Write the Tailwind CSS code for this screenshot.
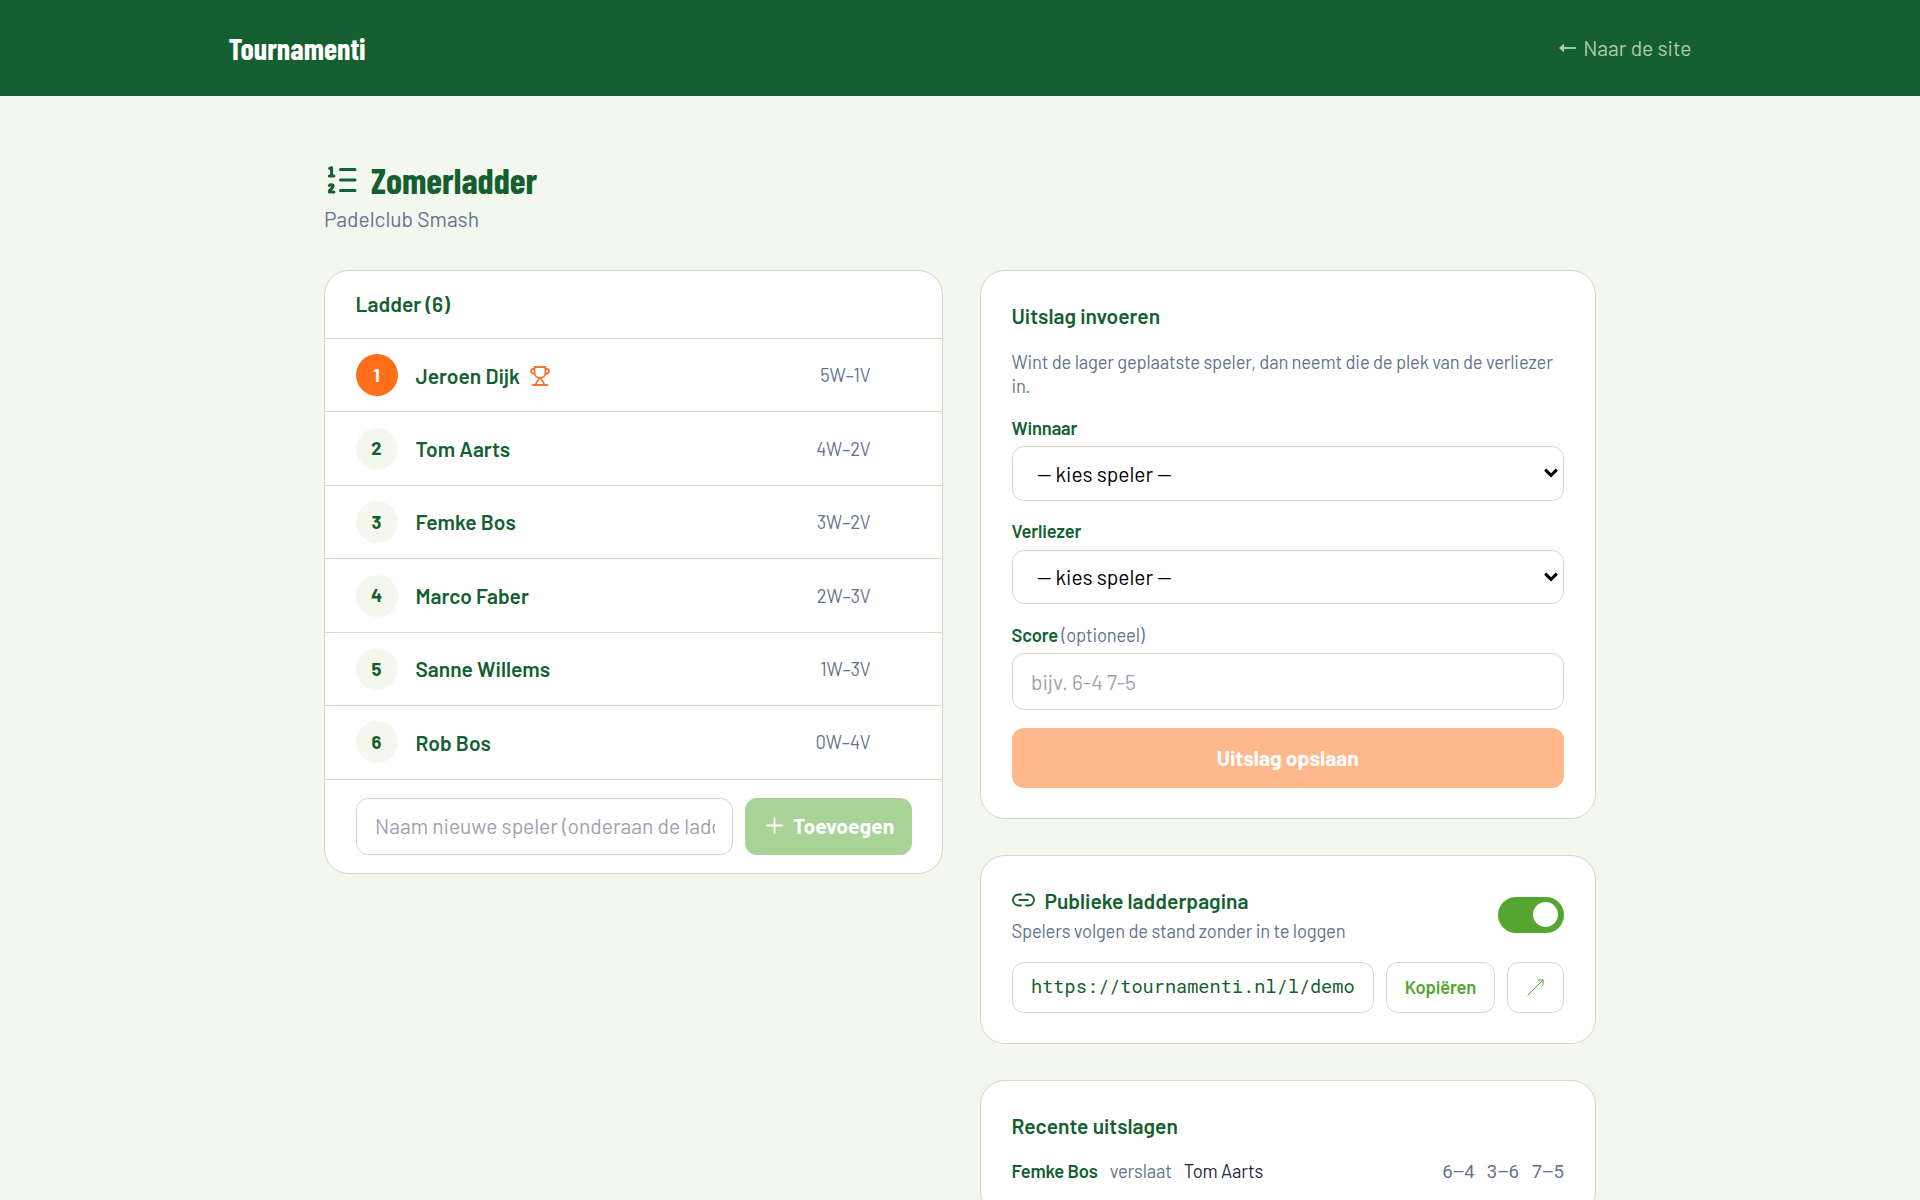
<!DOCTYPE html>
<html lang="nl">
<head>
    <meta charset="UTF-8">
    <meta name="viewport" content="width=device-width, initial-scale=1.0">
    <title>Zomerladder - Tournamenti</title>
    <script src="https://cdn.jsdelivr.net/npm/@tailwindcss/browser@4"></script>
</head>
<body class="bg-[#f4f7ee] text-slate-800 font-['Barlow',Roboto,sans-serif] text-[21px] leading-[1.3] h-[1200px] overflow-hidden">
    <header class="bg-[#145f30] h-[96px]">
        <div class="w-[1463px] mx-auto h-full flex items-center justify-between">
            <a href="#" class="font-['Barlow_Condensed',Roboto,sans-serif] font-bold text-[30px] text-white">Tournamenti</a>
            <a href="#" class="text-[#b1cbae] flex items-center gap-[7px]">
                <svg class="w-[17px] h-[10px]" viewBox="0 0 17 10" fill="none" stroke="currentColor" stroke-width="1.8"><path d="M4 5h13"/><path d="M0 5l5-4.5v9z" fill="currentColor" stroke="none"/></svg>
                Naar de site
            </a>
        </div>
    </header>

    <main class="w-[1272px] mx-auto pt-[60px]">
        <h1 class="flex items-center gap-[11px] h-[47px] font-['Barlow_Condensed',Roboto,sans-serif] font-bold text-[36.2px] text-[#145f30]">
            <svg class="w-[36px] h-[36px]" viewBox="0 0 36 36" fill="none" stroke="currentColor" stroke-width="3" stroke-linecap="round" stroke-linejoin="round">
                <path d="M16.5 7.5H31M16.5 18H31M16.5 28.5H31"/>
                <path d="M5.6 6.5L7.6 5.7v8M5.3 14h4.6"/>
                <path d="M5.4 23.5c1-1.4 4-1 3.7.9-.2 1.6-3.7 2.7-3.8 5.5h4.6"/>
            </svg>
            Zomerladder
        </h1>
        <p class="mt-[2px] h-[27px] text-slate-500">Padelclub Smash</p>

        <div class="mt-[38px] grid grid-cols-[619px_616px] gap-[36.5px] items-start">
            <section class="bg-white border border-[#d3d9c7] rounded-[25px] overflow-hidden">
                <h2 class="px-[30.5px] h-[67px] pb-[1px] flex items-center font-semibold text-[#145f30]">Ladder (6)</h2>
                <ul id="ladder"></ul>
                <form class="border-t border-[#d3d9c7] px-[30.5px] pt-[18.5px] pb-[18px] flex gap-3">
                    <input type="text" placeholder="Naam nieuwe speler (onderaan de ladder)" class="flex-1 min-w-0 h-[56.5px] pl-[18.5px] pr-[17px] pb-[1px] rounded-xl border border-[#d3d9c7] placeholder:text-[#9ca3af]">
                    <button type="button" class="w-[166.5px] h-[56.5px] pb-[1px] rounded-xl bg-[#a9d397] text-white font-bold flex items-center pl-[17px] gap-[6px]">
                        <svg class="w-[25px] h-[25px]" viewBox="0 0 512 512" fill="none" stroke="currentColor" stroke-width="36" stroke-linecap="round"><path d="M256 104v304M408 256H104"/></svg>
                        Toevoegen
                    </button>
                </form>
            </section>

            <div class="flex flex-col gap-[36.5px]">
                <section class="bg-white border border-[#d3d9c7] rounded-[25px] pl-[31px] pr-[30.5px] pt-[31px] h-[548.5px]">
                    <h2 class="font-semibold text-[#145f30] h-[27px]">Uitslag invoeren</h2>
                    <p class="mt-[20.5px] text-[18.4px] tracking-[-0.18px] leading-[24px] text-slate-500">Wint de lager geplaatste speler, dan neemt die de plek van de verliezer in.</p>
                    <label class="block mt-[19px] h-[23.5px] text-[18.4px] tracking-[-0.18px] font-semibold text-[#145f30]">Winnaar</label>
                    <div class="relative mt-[6px]">
                        <select class="appearance-none block w-full h-[54.5px] pl-[24.5px] pr-10 rounded-xl border border-[#d3d9c7] bg-white text-black">
                            <option>— kies speler —</option>
                        </select>
                        <svg class="absolute right-[6px] top-[22px] w-[14px] h-[10px]" viewBox="0 0 14 10" fill="none" stroke="black" stroke-width="3"><path d="M1.2 1.7L7 7.3l5.8-5.6"/></svg>
                    </div>
                    <label class="block mt-[19.5px] h-[23.5px] text-[18.4px] tracking-[-0.18px] font-semibold text-[#145f30]">Verliezer</label>
                    <div class="relative mt-[6px]">
                        <select class="appearance-none block w-full h-[54.5px] pl-[24.5px] pr-10 rounded-xl border border-[#d3d9c7] bg-white text-black">
                            <option>— kies speler —</option>
                        </select>
                        <svg class="absolute right-[6px] top-[22px] w-[14px] h-[10px]" viewBox="0 0 14 10" fill="none" stroke="black" stroke-width="3"><path d="M1.2 1.7L7 7.3l5.8-5.6"/></svg>
                    </div>
                    <label class="block mt-[19.5px] h-[23.5px] text-[18.4px] tracking-[-0.18px] font-semibold text-[#145f30]">Score <span class="font-normal text-slate-500">(optioneel)</span></label>
                    <input type="text" placeholder="bijv. 6-4 7-5" class="mt-[6px] block w-full h-[56.5px] px-[18.5px] rounded-xl border border-[#d3d9c7] placeholder:text-[#9ca3af]">
                    <button type="button" class="mt-[18px] w-full h-[60px] rounded-xl bg-[#ffb78c] text-white font-bold">Uitslag opslaan</button>
                </section>

                <section class="bg-white border border-[#d3d9c7] rounded-[25px] pl-[31px] pr-[30.5px] pt-[31px] h-[188.5px]">
                    <div class="flex justify-between">
                        <div>
                            <h2 class="h-[27px] flex items-center gap-[10px] font-semibold text-[#145f30]">
                                <svg class="w-[23px] h-[23px]" viewBox="0 0 23 23" fill="none" stroke="currentColor" stroke-width="1.8" stroke-linecap="round"><path d="M9 5.5H6.500a5.500 5.500 0 0 0 0 11H9M14 5.500h2.500a5.500 5.500 0 0 1 0 11H14M7.300 11h8.400"/></svg>
                                Publieke ladderpagina
                            </h2>
                            <p class="mt-[6px] h-[23.5px] text-[18.4px] tracking-[-0.18px] text-slate-500">Spelers volgen de stand zonder in te loggen</p>
                        </div>
                        <button type="button" class="mt-[9.5px] w-[66px] h-[36px] rounded-full bg-[#55a630] flex items-center justify-end pr-[6px]">
                            <span class="size-[25px] rounded-full bg-white"></span>
                        </button>
                    </div>
                    <div class="mt-[18px] flex gap-3 h-[51px]">
                        <input type="text" readonly value="https://tournamenti.nl/l/demo" class="flex-1 min-w-0 px-[18.5px] pb-[2px] rounded-xl border border-[#d3d9c7] text-[#145f30] font-['Roboto_Mono','Liberation_Mono',monospace] text-[18.6px]">
                        <button type="button" class="w-[109px] pt-[2px] rounded-xl border border-[#d3d9c7] text-[#55a630] text-[18.4px] tracking-[-0.18px] font-semibold">Kopiëren</button>
                        <button type="button" class="w-[57px] rounded-xl border border-[#d3d9c7] text-[#55a630] flex items-center justify-center">
                            <svg class="w-[17px] h-[17px]" viewBox="0 0 17 17" fill="none" stroke="currentColor" stroke-width="1"><path d="M.5 16.5L16 1M10.5 1.200L16.200.8 15.800 6.500"/></svg>
                        </button>
                    </div>
                </section>

                <section class="bg-white border border-[#d3d9c7] rounded-[25px] pl-[31px] pr-[30.5px] py-[31px]">
                    <h2 class="font-semibold text-[#145f30] h-[27px]">Recente uitslagen</h2>
                    <ul id="results" class="mt-[20px]"></ul>
                </section>
            </div>
        </div>
    </main>

    <script>
        const players = [
            { name: 'Jeroen Dijk', stats: '5W–1V' },
            { name: 'Tom Aarts', stats: '4W–2V' },
            { name: 'Femke Bos', stats: '3W–2V' },
            { name: 'Marco Faber', stats: '2W–3V' },
            { name: 'Sanne Willems', stats: '1W–3V' },
            { name: 'Rob Bos', stats: '0W–4V' }
        ];

        const results = [
            { winner: 'Femke Bos', loser: 'Tom Aarts', sets: ['6–4', '3–6', '7–5'] }
        ];

        const trophy = `<svg class="ml-[10px] mt-[2px] w-[20px] h-[20px] text-[#f5762c]" viewBox="0 0 20 20" fill="none" stroke="currentColor" stroke-width="1.8" stroke-linecap="round" stroke-linejoin="round">
            <path d="M4.5 1h11v5.5c0 3.200-2.500 5.500-5.500 5.500s-5.500-2.300-5.500-5.500z"/>
            <path d="M4.5 3H3a2 2 0 0 0-2 2c0 1.600 1.400 2.800 3.600 2.800M15.500 3H17a2 2 0 0 1 2 2c0 1.600-1.400 2.800-3.600 2.800"/>
            <path d="M8.8 12.2c0 2.800-2.600 2.800-2.800 6M11.200 12.200c0 2.800 2.600 2.800 2.800 6M2.500 19h15"/>
        </svg>`;

        document.getElementById('ladder').innerHTML = players.map((p, i) => `
            <li class="border-t border-[#d3d9c7] px-[30.5px] h-[73.45px] flex items-center">
                <span class="size-[42px] pt-[1px] rounded-full flex items-center justify-center text-[18.4px] font-bold ${i === 0 ? 'bg-[#ff6f1a] text-white' : 'bg-[#f4f7ee] text-[#145f30]'}">${i + 1}</span>
                <span class="ml-[18px] font-semibold text-[#145f30]">${p.name}</span>
                ${i === 0 ? trophy : ''}
                <span class="ml-auto mr-[41px] pt-[2px] text-[18.4px] tracking-[-0.18px] text-slate-500">${p.stats}</span>
            </li>`).join('');

        document.getElementById('results').innerHTML = results.map(r => `
            <li class="flex items-center gap-3 text-[18.4px] tracking-[-0.18px] leading-[25px]">
                <span class="font-semibold text-[#145f30]">${r.winner}</span>
                <span class="text-slate-500">verslaat</span>
                <span>${r.loser}</span>
                <span class="ml-auto flex gap-3 text-slate-500 font-['Roboto_Mono','Liberation_Mono',monospace]">${r.sets.map(s => `<span>${s}</span>`).join('')}</span>
            </li>`).join('');
    </script>
</body>
</html>
